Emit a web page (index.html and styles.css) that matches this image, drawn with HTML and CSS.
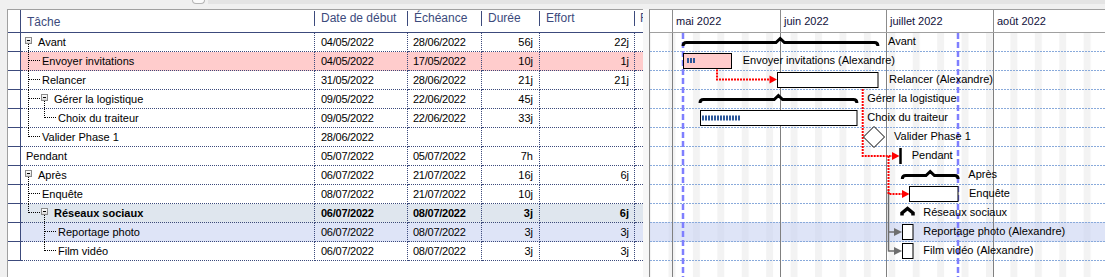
FILE: index.html
```html
<!DOCTYPE html>
<html lang="fr">
<head>
  <meta charset="UTF-8">
  <title>Planning</title>
  <link rel="stylesheet" href="styles.css">
</head>
<body>
  <div class="topbar"><span class="knob"></span><span class="band"></span></div>

  <div class="main">
    <section class="grid">
      <div class="row head">
        <div class="c rh"></div>
        <div class="c task">Tâche</div>
        <div class="c start">Date de début</div>
        <div class="c end">Échéance</div>
        <div class="c dur">Durée</div>
        <div class="c eff">Effort</div>
        <div class="c f">F</div>
      </div>

      <div class="row">
        <div class="c rh"></div>
        <div class="c task"><span class="box"></span><span class="name">Avant</span></div>
        <div class="c start">04/05/2022</div>
        <div class="c end">28/06/2022</div>
        <div class="c dur">56j</div>
        <div class="c eff">22j</div>
        <div class="c f"></div>
      </div>
      <div class="row pink">
        <div class="c rh"></div>
        <div class="c task"><span class="g tee"></span><span class="name">Envoyer invitations</span></div>
        <div class="c start">04/05/2022</div>
        <div class="c end">17/05/2022</div>
        <div class="c dur">10j</div>
        <div class="c eff">1j</div>
        <div class="c f"></div>
      </div>
      <div class="row">
        <div class="c rh"></div>
        <div class="c task"><span class="g tee"></span><span class="name">Relancer</span></div>
        <div class="c start">31/05/2022</div>
        <div class="c end">28/06/2022</div>
        <div class="c dur">21j</div>
        <div class="c eff">21j</div>
        <div class="c f"></div>
      </div>
      <div class="row">
        <div class="c rh"></div>
        <div class="c task"><span class="g tee"></span><span class="box"></span><span class="name">Gérer la logistique</span></div>
        <div class="c start">09/05/2022</div>
        <div class="c end">22/06/2022</div>
        <div class="c dur">45j</div>
        <div class="c eff"></div>
        <div class="c f"></div>
      </div>
      <div class="row">
        <div class="c rh"></div>
        <div class="c task"><span class="g pipe"></span><span class="g elbow"></span><span class="name">Choix du traiteur</span></div>
        <div class="c start">09/05/2022</div>
        <div class="c end">22/06/2022</div>
        <div class="c dur">33j</div>
        <div class="c eff"></div>
        <div class="c f"></div>
      </div>
      <div class="row">
        <div class="c rh"></div>
        <div class="c task"><span class="g elbow"></span><span class="name">Valider Phase 1</span></div>
        <div class="c start">28/06/2022</div>
        <div class="c end"></div>
        <div class="c dur"></div>
        <div class="c eff"></div>
        <div class="c f"></div>
      </div>
      <div class="row">
        <div class="c rh"></div>
        <div class="c task"><span class="name">Pendant</span></div>
        <div class="c start">05/07/2022</div>
        <div class="c end">05/07/2022</div>
        <div class="c dur">7h</div>
        <div class="c eff"></div>
        <div class="c f"></div>
      </div>
      <div class="row">
        <div class="c rh"></div>
        <div class="c task"><span class="box"></span><span class="name">Après</span></div>
        <div class="c start">06/07/2022</div>
        <div class="c end">21/07/2022</div>
        <div class="c dur">16j</div>
        <div class="c eff">6j</div>
        <div class="c f"></div>
      </div>
      <div class="row">
        <div class="c rh"></div>
        <div class="c task"><span class="g tee"></span><span class="name">Enquête</span></div>
        <div class="c start">08/07/2022</div>
        <div class="c end">21/07/2022</div>
        <div class="c dur">10j</div>
        <div class="c eff"></div>
        <div class="c f"></div>
      </div>
      <div class="row grey bold">
        <div class="c rh"></div>
        <div class="c task"><span class="g elbow"></span><span class="box"></span><span class="name">Réseaux sociaux</span></div>
        <div class="c start">06/07/2022</div>
        <div class="c end">08/07/2022</div>
        <div class="c dur">3j</div>
        <div class="c eff">6j</div>
        <div class="c f"></div>
      </div>
      <div class="row blue">
        <div class="c rh"></div>
        <div class="c task"><span class="g blank"></span><span class="g tee"></span><span class="name">Reportage photo</span></div>
        <div class="c start">06/07/2022</div>
        <div class="c end">08/07/2022</div>
        <div class="c dur">3j</div>
        <div class="c eff">3j</div>
        <div class="c f"></div>
      </div>
      <div class="row">
        <div class="c rh"></div>
        <div class="c task"><span class="g blank"></span><span class="g elbow"></span><span class="name">Film vidéo</span></div>
        <div class="c start">06/07/2022</div>
        <div class="c end">08/07/2022</div>
        <div class="c dur">3j</div>
        <div class="c eff">3j</div>
        <div class="c f"></div>
      </div>
    </section>

    <div class="splitter"></div>

    <section class="chart">
      <div class="months">
        <div class="m"></div>
        <div class="m">mai 2022</div>
        <div class="m">juin 2022</div>
        <div class="m">juillet 2022</div>
        <div class="m">août 2022</div>
      </div>

      <!-- 1 day = 3.489px, 1 mai at x=22 ; row i = 19px, centre at 19i+9 -->
      <svg class="gantt" width="455" height="244" viewBox="0 0 455 244">
        <defs>
          <pattern id="weekend" x="42.93" y="0" width="24.423" height="244" patternUnits="userSpaceOnUse">
            <rect width="6.98" height="244" fill="#f3f3f3"/>
          </pattern>
        </defs>
        <rect width="455" height="244" fill="url(#weekend)"/>
        <rect y="189" width="455" height="20" fill="#c8d2f2" fill-opacity="0.6"/>

        <g stroke="#89aadb" stroke-dasharray="2 1">
          <line x1="0" x2="455" y1="18.5" y2="18.5"/>
          <line x1="0" x2="455" y1="37.5" y2="37.5"/>
          <line x1="0" x2="455" y1="56.5" y2="56.5"/>
          <line x1="0" x2="455" y1="75.5" y2="75.5"/>
          <line x1="0" x2="455" y1="94.5" y2="94.5"/>
          <line x1="0" x2="455" y1="113.5" y2="113.5"/>
          <line x1="0" x2="455" y1="132.5" y2="132.5"/>
          <line x1="0" x2="455" y1="151.5" y2="151.5"/>
          <line x1="0" x2="455" y1="170.5" y2="170.5"/>
          <line x1="0" x2="455" y1="189.5" y2="189.5"/>
          <line x1="0" x2="455" y1="208.5" y2="208.5"/>
          <line x1="0" x2="455" y1="227.5" y2="227.5"/>
        </g>

        <g stroke="#808080">
          <line x1="22.5" x2="22.5" y1="0" y2="244"/>
          <line x1="130.5" x2="130.5" y1="0" y2="244"/>
          <line x1="236.5" x2="236.5" y1="0" y2="244"/>
          <line x1="343.5" x2="343.5" y1="0" y2="244"/>
        </g>

        <g stroke="#7f7fff" stroke-width="2.5" stroke-dasharray="6 3">
          <line x1="33" x2="33" y1="0" y2="244"/>
          <line x1="308" x2="308" y1="0" y2="244"/>
        </g>

        <!-- summary braces -->
        <g fill="none" stroke="#000" stroke-width="3">
          <path d="M33,13 Q33,9.5 36.5,9.5 L126,9.5 L130.2,5.5 L134.4,9.5 L224.4,9.5 Q227.9,9.5 227.9,13"/>
          <path d="M50,70 Q50,66.5 53.5,66.5 L124.2,66.5 L128.4,62.5 L132.6,66.5 L203.4,66.5 Q206.9,66.5 206.9,70"/>
          <path d="M252.3,146 Q252.3,142.5 255.8,142.5 L276,142.5 L280.2,138.5 L284.4,142.5 L304.6,142.5 Q308.1,142.5 308.1,146"/>
          <path d="M252,182.5 L252,180 L257.5,175.5 L263,180 L263,182.5" stroke-width="3.5"/>
        </g>

        <!-- links -->
        <g fill="none" stroke="#6e6e6e" stroke-width="1.5">
          <path d="M238.5,157 V218.5"/>
          <path d="M238.5,199 H245"/>
          <path d="M238.5,218 H245"/>
        </g>
        <g fill="#6e6e6e">
          <polygon points="244,195 252,199 244,203"/>
          <polygon points="244,214 252,218 244,222"/>
        </g>
        <g fill="none" stroke="#ff0000" stroke-width="2" stroke-dasharray="2 1">
          <path d="M67,36.5 V46.5 H120"/>
          <path d="M212.7,56 V123 H242"/>
          <path d="M238.5,123 V161 H252"/>
        </g>
        <g fill="#ff0000">
          <polygon points="119.5,42.5 127,46.5 119.5,50.5"/>
          <polygon points="242,119 249.5,123 242,127"/>
          <polygon points="252,157 259.5,161 252,165"/>
        </g>

        <!-- bars -->
        <g stroke="#000" fill="#fff">
          <rect x="33.5" y="20.5" width="48" height="15" fill="#ffcccc"/>
          <rect x="127.5" y="39.5" width="100.5" height="15"/>
          <rect x="50.5" y="77.5" width="156.5" height="15"/>
          <polygon points="213.5,104 224,93.5 234.5,104 224,114.5"/>
          <rect x="259.5" y="153.5" width="48.5" height="15"/>
          <rect x="252.5" y="191.5" width="10.5" height="15"/>
          <rect x="252.5" y="210.5" width="10.5" height="15"/>
        </g>
        <line x1="250.5" x2="250.5" y1="115" y2="131" stroke="#000" stroke-width="2.5"/>
        <g stroke="#2b579a" stroke-width="5" stroke-dasharray="2 1">
          <line x1="37" x2="45" y1="27.5" y2="27.5"/>
          <line x1="52" x2="90" y1="85" y2="85"/>
        </g>

        <g class="labels">
          <text x="238" y="12">Avant</text>
          <text x="92.7" y="31">Envoyer invitations (Alexandre)</text>
          <text x="239" y="50">Relancer (Alexandre)</text>
          <text x="217.3" y="69">Gérer la logistique</text>
          <text x="217.3" y="88">Choix du traiteur</text>
          <text x="244" y="107">Valider Phase 1</text>
          <text x="261.7" y="126">Pendant</text>
          <text x="318.3" y="145">Après</text>
          <text x="319" y="164">Enquête</text>
          <text x="273.3" y="183">Réseaux sociaux</text>
          <text x="273.3" y="202">Reportage photo (Alexandre)</text>
          <text x="273.3" y="221">Film vidéo (Alexandre)</text>
        </g>
      </svg>
    </section>
  </div>
</body>
</html>
```

FILE: styles.css
```css
* {
  box-sizing: border-box;
}

body {
  margin: 0;
  width: 1105px;
  height: 277px;
  overflow: hidden;
  background: #f0f0f0;
  font-family: "Liberation Sans", Arial, sans-serif;
  font-size: 11px;
  color: #000;
}

.topbar {
  height: 9px;
  display: flex;
  align-items: flex-start;
  padding-left: 192px;
}
.knob {
  width: 13px;
  height: 4px;
  border: 1px solid #b4b4b4;
  border-top: 0;
  border-radius: 0 0 4px 4px;
  background: #fafafa;
}
.band {
  flex: 1;
  height: 4px;
  margin-left: 3px;
  background: #e4e4e4;
}

.main {
  display: flex;
  height: 268px;
}

/* task table */
.grid {
  width: 636px;
  margin-left: 7px;
  background: #fff;
  border-left: 1px solid #a0a0a0;
  border-top: 1px solid #a0a0a0;
}
.row {
  display: grid;
  grid-template-columns: 13px 294px 93px 74px 58px 95px 8px;
  height: 19px;
}
.c {
  border-right: 1px dotted #3c4a7c;
  border-bottom: 1px dotted #3c4a7c;
  line-height: 18px;
  white-space: nowrap;
  overflow: hidden;
}
.c.rh {
  border-right: 1px solid #3c4a7c;
  border-bottom: 1px solid #3c4a7c;
  background: #fff;
}
.c.f {
  border-right: 0;
}
.start {
  padding-left: 6px;
  letter-spacing: -0.25px;
}
.end {
  padding-left: 5px;
  letter-spacing: -0.25px;
}
.dur {
  text-align: right;
  padding-right: 6px;
}
.eff {
  text-align: right;
  padding-right: 5px;
}

.row.head {
  height: 23px;
}
.head .c {
  border-right: 0;
  border-bottom: 1px solid #3c4a7c;
  padding: 1px 0 0 6px;
  font-size: 12px;
  line-height: 14px;
  letter-spacing: 0;
  text-align: left;
  color: #3c4a7c;
  background: linear-gradient(#3c4a7c, #3c4a7c) no-repeat right 0 top 1px / 1px 15px;
}
.head .c.rh {
  padding: 0;
  border-right: 1px solid #3c4a7c;
  background: #fff;
}
.head .c.f {
  padding-left: 5px;
  background: #fff;
}

.row.pink .c:not(.rh) {
  background: #ffcccc;
}
.row.grey .c:not(.rh) {
  background: #dfe6ee;
}
.row.blue .c:not(.rh) {
  background: #dee4f7;
}
.row.bold .c {
  font-weight: bold;
}

/* tree column */
.task {
  display: flex;
  align-items: center;
  overflow: visible;
}
.g {
  flex: none;
  width: 16px;
  height: 18px;
  position: relative;
}
.g::before {
  content: "";
  position: absolute;
  left: 7px;
  top: 0;
  height: 19px;
  border-left: 1px dotted #000;
}
.g.elbow::before {
  height: 9px;
}
.g.blank::before {
  content: none;
}
.g.tee::after,
.g.elbow::after {
  content: "";
  position: absolute;
  left: 7px;
  top: 8px;
  width: 12px;
  border-top: 1px dotted #000;
}
.box {
  flex: none;
  align-self: flex-start;
  width: 7px;
  height: 7px;
  margin: 4px 0 0 4px;
  border: 1px solid #8a8a8a;
  background: linear-gradient(#fff, #d8d8d8);
  position: relative;
}
.box::before {
  content: "";
  position: absolute;
  left: 1px;
  top: 2px;
  width: 3px;
  height: 1px;
  background: #000;
}
.box::after {
  content: "";
  position: absolute;
  left: 2px;
  top: 6px;
  height: 7px;
  border-left: 1px dotted #000;
}
.name {
  margin-left: 5px;
}
.box + .name {
  margin-left: 6px;
}

.splitter {
  width: 6px;
  background: #f7f7f7;
}

/* gantt */
.chart {
  flex: 1;
  min-width: 0;
  background: #fff;
  border-left: 1px solid #8c8c8c;
  border-top: 1px solid #a0a0a0;
  overflow: hidden;
}
.months {
  display: grid;
  grid-template-columns: 23px 108px 106px 107px 1fr;
  height: 23px;
  border-bottom: 1px solid #a0a0a0;
}
.m {
  border-right: 1px solid #8c8c8c;
  padding-left: 3px;
  line-height: 22px;
  color: #10103a;
  white-space: nowrap;
}
.m:last-child {
  border-right: 0;
}
.gantt {
  display: block;
}
.labels text {
  font-family: "Liberation Sans", Arial, sans-serif;
  font-size: 11px;
  fill: #000;
}
```
